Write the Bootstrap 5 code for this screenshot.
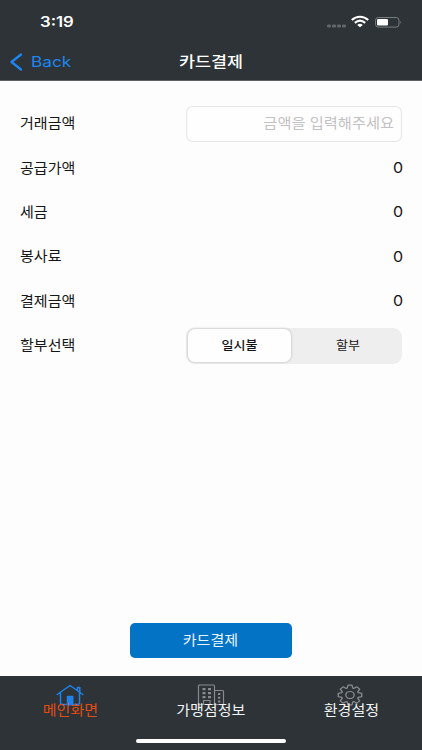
<!DOCTYPE html>
<html lang="ko">
<head>
<meta charset="utf-8">
<meta name="viewport" content="width=device-width, initial-scale=1">
<title>카드결제</title>
<link href="https://cdn.jsdelivr.net/npm/bootstrap@5.3.0/dist/css/bootstrap.min.css" rel="stylesheet">
<style>
body{font-family:Inter,"Noto Sans CJK KR",sans-serif;font-size:13.8px;line-height:20px;color:#161616;background:#fdfdfd}
.app{height:750px}
.top{height:81px;background:#2d3337;border-bottom:1px solid #5d6164}
.status{height:44px;padding:0 20px 0 40px}
.clock{font-weight:600;font-size:14.3px;transform:scaleX(1.17);transform-origin:left}
.back{color:#1e86ee;width:169px;padding-left:10px;text-decoration:none;font-size:14.5px}
.back span{transform:scaleX(1.19);transform-origin:left;margin-left:9px}
.titlebar{height:36px}
.heading{font-weight:500;color:#fff;font-size:15px;width:84px;line-height:20px;transform:scaleX(1.16)}
.rows{padding:20.5px 20px 0}
.line{height:44.4px}
.wide{transform:scaleX(1.09);display:inline-block}
.line>.wide{transform-origin:left;margin-top:-1px}
.line>.num{transform:scaleX(1.12);transform-origin:right;font-size:14.3px;margin-right:-.7px;margin-top:0}
.field{width:198.2px;height:36px;border:1px solid #e6e6e8;border-radius:6px;background:#fefefe;font-size:14px;padding:0 6.5px 2px;transform:scaleX(1.09);transform-origin:right}
.field::placeholder{color:#c2c2c4;opacity:1}
.seg{width:216px;height:36px;border-radius:9px;background:#eee;padding:1.5px}
.seg button{font-size:12px;line-height:20px;border:0;background:none;color:#161616;padding:0}
.seg .on{background:#fefefe;border-radius:7px;font-weight:500;box-shadow:0 0 2px 1px #d4d4d8;width:103.5px}
.seg .off{padding-left:4px}
.pay{width:162px;height:35px;background:#0273c5;border-radius:5px;color:#eaf5fd;font-size:13.8px;line-height:20px;padding:0 1px 2px 0;margin-bottom:18px;border:0}
.tabs{height:74px;background:#2d3337;color:#f2f4f5}
.tab{padding-top:8px}
.tab .wide{margin-top:-6px}
.tab.cur{color:#e04c12}
.homebar{left:136px;bottom:7px;width:150px;height:4px;background:#fff;border-radius:2px}
</style>
<script src="https://cdn.jsdelivr.net/npm/bootstrap@5.3.0/dist/js/bootstrap.bundle.min.js"></script>
</head>
<body>
<div class="app d-flex flex-column overflow-hidden">
  <header class="top text-white flex-shrink-0">
    <div class="status d-flex align-items-center justify-content-between">
      <span class="clock">3:19</span>
      <svg width="77" height="14" viewBox="0 0 77 14">
        <g fill="#62676b"><rect x="2" y="9.5" width="4" height="3" rx="1.3"/><rect x="7" y="9.5" width="4" height="3" rx="1.3"/><rect x="12" y="9.5" width="4" height="3" rx="1.3"/><rect x="17" y="9.5" width="4" height="3" rx="1.3"/></g>
        <path d="M26.8 5.1C31.5 .7 38.5 .7 43.2 5.1M29.8 7.9C33 5.1 37 5.1 40.2 7.9" fill="none" stroke="#fff" stroke-width="2.1"/>
        <path d="M32.2 9.9Q35 7.8 37.8 9.9L35 12.3Z" fill="#fff"/>
        <rect x="50.5" y="2.5" width="23.5" height="9.6" rx="2.8" fill="none" stroke="#777c7f"/>
        <rect x="52" y="4" width="11" height="6.6" rx="1.3" fill="#fff"/>
        <path d="M75.2 5.7Q76.8 7.3 75.2 8.9Z" fill="#777c7f"/>
      </svg>
    </div>
    <nav class="titlebar d-flex align-items-center">
      <a class="back d-flex align-items-center" href="#">
        <svg width="12" height="18" viewBox="0 0 12 18"><path d="M11 1.5L1.5 9L11 16.5" fill="none" stroke="#1e86ee" stroke-width="2.4" stroke-linecap="round" stroke-linejoin="round"/></svg>
        <span>Back</span>
      </a>
      <h1 class="heading m-0 text-center text-nowrap">카드결제</h1>
    </nav>
  </header>
  <main class="rows flex-grow-1">
    <div class="line d-flex align-items-center justify-content-between"><label class="wide" for="amt">거래금액</label><input id="amt" class="field text-end" placeholder="금액을 입력해주세요"></div>
    <div class="line d-flex align-items-center justify-content-between"><span class="wide">공급가액</span><span class="wide num">0</span></div>
    <div class="line d-flex align-items-center justify-content-between"><span class="wide">세금</span><span class="wide num">0</span></div>
    <div class="line d-flex align-items-center justify-content-between"><span class="wide">봉사료</span><span class="wide num">0</span></div>
    <div class="line d-flex align-items-center justify-content-between"><span class="wide">결제금액</span><span class="wide num">0</span></div>
    <div class="line d-flex align-items-center justify-content-between"><span class="wide">할부선택</span>
      <div class="seg d-flex"><button class="on"><span class="wide">일시불</span></button><button class="off flex-fill"><span class="wide">할부</span></button></div>
    </div>
  </main>
  <button class="pay btn align-self-center flex-shrink-0"><span class="wide">카드결제</span></button>
  <footer class="tabs d-flex position-relative flex-shrink-0">
    <div class="tab cur w-100 d-flex flex-column align-items-center">
      <svg width="28" height="22" viewBox="0 0 28 22" fill="none" stroke="#1e82ea" stroke-width="1.5" stroke-linecap="round" stroke-linejoin="round"><path d="M1.2 10.5L14 1.5L26.8 10.5M4.500 8.5V18.5Q4.500 20.5 6.500 20.5H21.5Q23.5 20.5 23.5 18.5V8.5M21.5 6.500V3.500H23.8V8"/><path d="M11.5 20.5V12.5H16.7V20.5Z" fill="#1e82ea"/></svg>
      <span class="wide">메인화면</span>
    </div>
    <div class="tab w-100 d-flex flex-column align-items-center">
      <svg width="28" height="22" viewBox="0 0 28 22" fill="none" stroke="#878b8e" stroke-width="1.2"><path d="M1.5 20.5V2Q1.5 1 2.5 1H16.5Q17.5 1 17.5 2V20.5ZM17.5 6.5H25.5Q26.5 6.5 26.5 7.5V20.5H17.5M6.5 20.5V16.5H13V20.5"/><path fill="#878b8e" stroke="none" d="M5.500 4h3v2.300h-3zM11 4h3v2.300h-3zM5.500 8h3v2.300h-3zM11 8h3v2.300h-3zM5.500 12h3v2.300h-3zM11 12h3v2.300h-3zM21 9h2.300v2H21zM21 12.800h2.300v2H21zM21 16.500h2.300v2H21z"/></svg>
      <span class="wide">가맹점정보</span>
    </div>
    <div class="tab w-100 d-flex flex-column align-items-center">
      <svg class="me-1" width="26" height="22" viewBox="-12.5 -12.5 25 25" preserveAspectRatio="none" fill="none" stroke="#878b8e" stroke-width="1.3" stroke-linejoin="round"><path d="M-2.700-7.800L-1.900-11.300H1.900L2.700-7.800L3.610-7.420L6.650-9.330L9.330-6.650L7.420-3.610L7.800-2.700L11.300-1.900V1.900L7.800 2.700L7.420 3.610L9.330 6.650L6.650 9.330L3.610 7.420L2.700 7.800L1.900 11.300H-1.900L-2.700 7.800L-3.610 7.420L-6.650 9.330L-9.330 6.650L-7.420 3.610L-7.800 2.700L-11.300 1.900V-1.900L-7.800-2.700L-7.420-3.610L-9.330-6.650L-6.650-9.330L-3.610-7.420Z"/><circle r="4"/></svg>
      <span class="wide">환경설정</span>
    </div>
    <div class="homebar position-absolute"></div>
  </footer>
</div>
</body>
</html>
